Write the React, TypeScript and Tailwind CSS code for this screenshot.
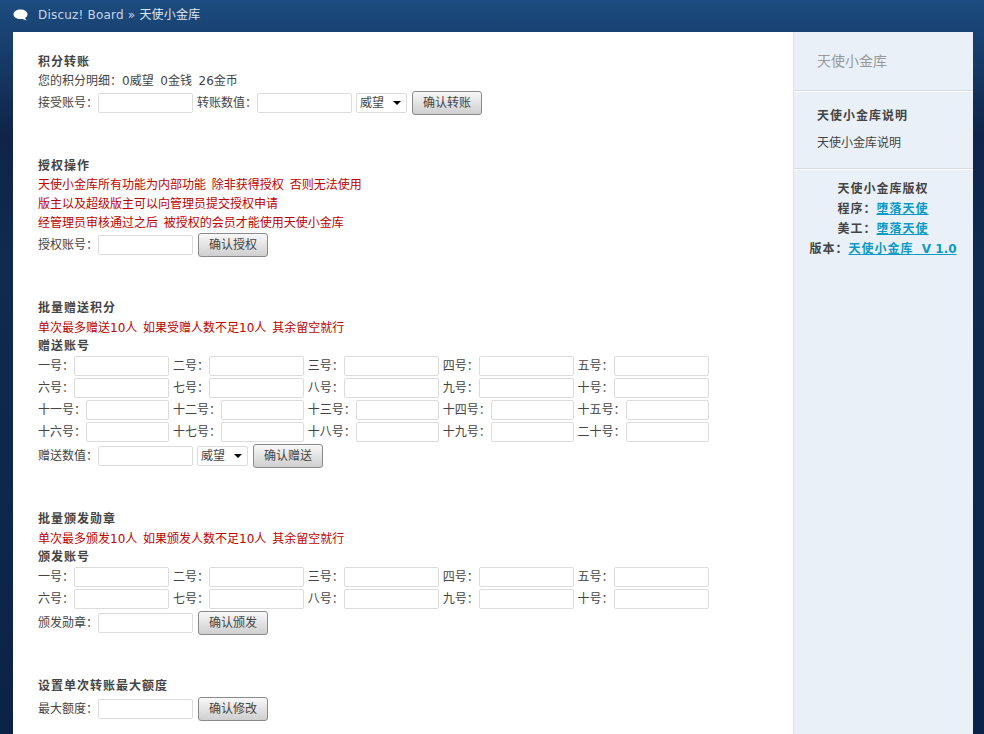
import type { ReactNode } from "react";

const FONT = "font-['DejaVu_Sans','Noto_Sans_CJK_SC',sans-serif]";

const FIRST_TEN = ["一号", "二号", "三号", "四号", "五号", "六号", "七号", "八号", "九号", "十号"];
const SECOND_TEN = ["十一号", "十二号", "十三号", "十四号", "十五号", "十六号", "十七号", "十八号", "十九号", "二十号"];

function TextInput({ className = "w-[95px]" }: { className?: string }) {
  return (
    <input
      type="text"
      className={`h-5 shrink-0 rounded-[2px] border border-[#dcdcdc] bg-white ${className}`}
    />
  );
}

function Label({ children }: { children: ReactNode }) {
  return <span className="mr-[-4px] w-[60px] shrink-0 whitespace-nowrap">{children}：</span>;
}

function Btn({ children }: { children: ReactNode }) {
  return (
    <button className="ml-px h-6 w-[70px] shrink-0 rounded-[3px] border border-[#8a8a8a] bg-gradient-to-b from-[#f8f8f8] to-[#cfcfcf] text-center text-xs text-[#444]">
      {children}
    </button>
  );
}

function Weiwang() {
  return (
    <div className="relative h-5 w-[51px] shrink-0">
      <select className="h-5 w-full appearance-none rounded-[2px] border border-[#dcdcdc] bg-white pl-[3px] text-xs text-[#444]">
        <option>威望</option>
      </select>
      <span className="pointer-events-none absolute right-[6px] top-[8px] h-0 w-0 border-x-[4px] border-t-[4px] border-x-transparent border-t-black" />
    </div>
  );
}

function Title({ children }: { children: ReactNode }) {
  return <h3 className="h-5 pt-px text-xs font-bold leading-5 tracking-[1px] text-[#444]">{children}</h3>;
}

function SubTitle({ children }: { children: ReactNode }) {
  return <h4 className="h-5 text-xs font-bold leading-5 tracking-[1px] text-[#444]">{children}</h4>;
}

function Red({ children, className = "top-px" }: { children: ReactNode; className?: string }) {
  return (
    <p className={`relative h-[18.5px] text-xs leading-[18.5px] text-[#c00000] [word-spacing:2px] ${className}`}>
      {children}
    </p>
  );
}

function MemberGrid({ first, second }: { first: string[]; second?: string[] }) {
  const names = second ? [...first, ...second] : first;
  return (
    <div className="flex w-[680px] flex-wrap gap-x-[3.5px] gap-y-[2px]">
      {names.map((name) => (
        <div key={name} className="flex h-5 w-[131.4px] items-center justify-between">
          <span className="whitespace-nowrap">{name}：</span>
          <TextInput className={name.length > 2 ? "w-[83px]" : "w-[95px]"} />
        </div>
      ))}
    </div>
  );
}

export default function App() {
  return (
    <div className={`flex h-screen flex-col overflow-hidden bg-[linear-gradient(180deg,#1c4c80_0,#0f2448_135px,#102a50_260px,#0b2347_100%)] text-xs text-[#444] ${FONT}`}>
      <header className="flex h-8 shrink-0 items-center pb-[2px] pl-[13px] text-[#c5d6e8]">
        <svg width="15" height="12" viewBox="0 0 15 12" className="mr-[10px]" aria-hidden>
          <path d="M7.5 0.5C11.4 0.5 14.5 2.6 14.5 5.3C14.5 6.9 13.5 8.2 12 9.1L13.8 11.6L9.4 9.9C8.8 10 8.2 10.1 7.5 10.1C3.6 10.1 0.5 8 0.5 5.3C0.5 2.6 3.6 0.5 7.5 0.5Z" fill="#fff" />
        </svg>
        <span className="tracking-[0.2px]">
          Discuz! Board » <span className="text-[#dfe8f2]">天使小金库</span>
        </span>
      </header>

      <div className="ml-[13px] flex min-h-0 flex-1">
        <main className="w-[780px] shrink-0 bg-white pl-[25px] pt-[19px]">
          <section className="h-[104px]">
            <Title>积分转账</Title>
            <p className="h-5 leading-5 [word-spacing:-0.5px]">您的积分明细：0威望&nbsp;&nbsp;0金钱&nbsp;&nbsp;26金币</p>
            <div className="flex items-center gap-1">
              <Label>接受账号</Label>
              <TextInput />
              <Label>转账数值</Label>
              <TextInput />
              <Weiwang />
              <Btn>确认转账</Btn>
            </div>
          </section>

          <section className="h-[142px]">
            <Title>授权操作</Title>
            <Red>天使小金库所有功能为内部功能 除非获得授权 否则无法使用</Red>
            <Red>版主以及超级版主可以向管理员提交授权申请</Red>
            <Red className="top-[2px]">经管理员审核通过之后 被授权的会员才能使用天使小金库</Red>
            <div className="mt-[2px] flex items-center gap-1">
              <Label>授权账号</Label>
              <TextInput />
              <Btn>确认授权</Btn>
            </div>
          </section>

          <section className="h-[211px]">
            <Title>批量赠送积分</Title>
            <Red className="top-[2px]">单次最多赠送10人 如果受赠人数不足10人 其余留空就行</Red>
            <SubTitle>赠送账号</SubTitle>
            <MemberGrid first={FIRST_TEN} second={SECOND_TEN} />
            <div className="mt-[2px] flex items-center gap-1">
              <Label>赠送数值</Label>
              <TextInput />
              <Weiwang />
              <Btn>确认赠送</Btn>
            </div>
          </section>

          <section className="h-[167px]">
            <Title>批量颁发勋章</Title>
            <Red className="top-[2px]">单次最多颁发10人 如果颁发人数不足10人 其余留空就行</Red>
            <SubTitle>颁发账号</SubTitle>
            <MemberGrid first={FIRST_TEN} />
            <div className="mt-[2px] flex items-center gap-1">
              <Label>颁发勋章</Label>
              <TextInput />
              <Btn>确认颁发</Btn>
            </div>
          </section>

          <section>
            <Title>设置单次转账最大额度</Title>
            <div className="mt-[2px] flex items-center gap-1">
              <Label>最大额度</Label>
              <TextInput />
              <Btn>确认修改</Btn>
            </div>
          </section>
        </main>

        <aside className="w-[180px] shrink-0 border-l border-[#dbe4ec] bg-[#e9f0f7]">
          <div className="h-[59px] border-b border-[#d5dde5] pl-[23px] pt-[19px] text-sm leading-5 text-[#999]">天使小金库</div>
          <div className="h-[78px] border-b border-t border-b-[#d5dde5] border-t-white pl-[23px] pt-[14px]">
            <h4 className="h-5 font-bold leading-5 tracking-[1px]">天使小金库说明</h4>
            <p className="mt-[7px] leading-5">天使小金库说明</p>
          </div>
          <div className="border-t border-white pr-px pt-[9px] text-center font-bold leading-5">
            <p className="tracking-[1px]">天使小金库版权</p>
            <p className="tracking-[1px]">程序：<a className="text-[#0a9ac5] underline">堕落天使</a></p>
            <p className="tracking-[1px]">美工：<a className="text-[#0a9ac5] underline">堕落天使</a></p>
            <p>
              <span className="tracking-[1px]">版本：</span>
              <a className="text-[#0a9ac5] underline">
                <span className="tracking-[1px]">天使小金库</span> &nbsp;V 1.0
              </a>
            </p>
          </div>
        </aside>
      </div>
    </div>
  );
}
